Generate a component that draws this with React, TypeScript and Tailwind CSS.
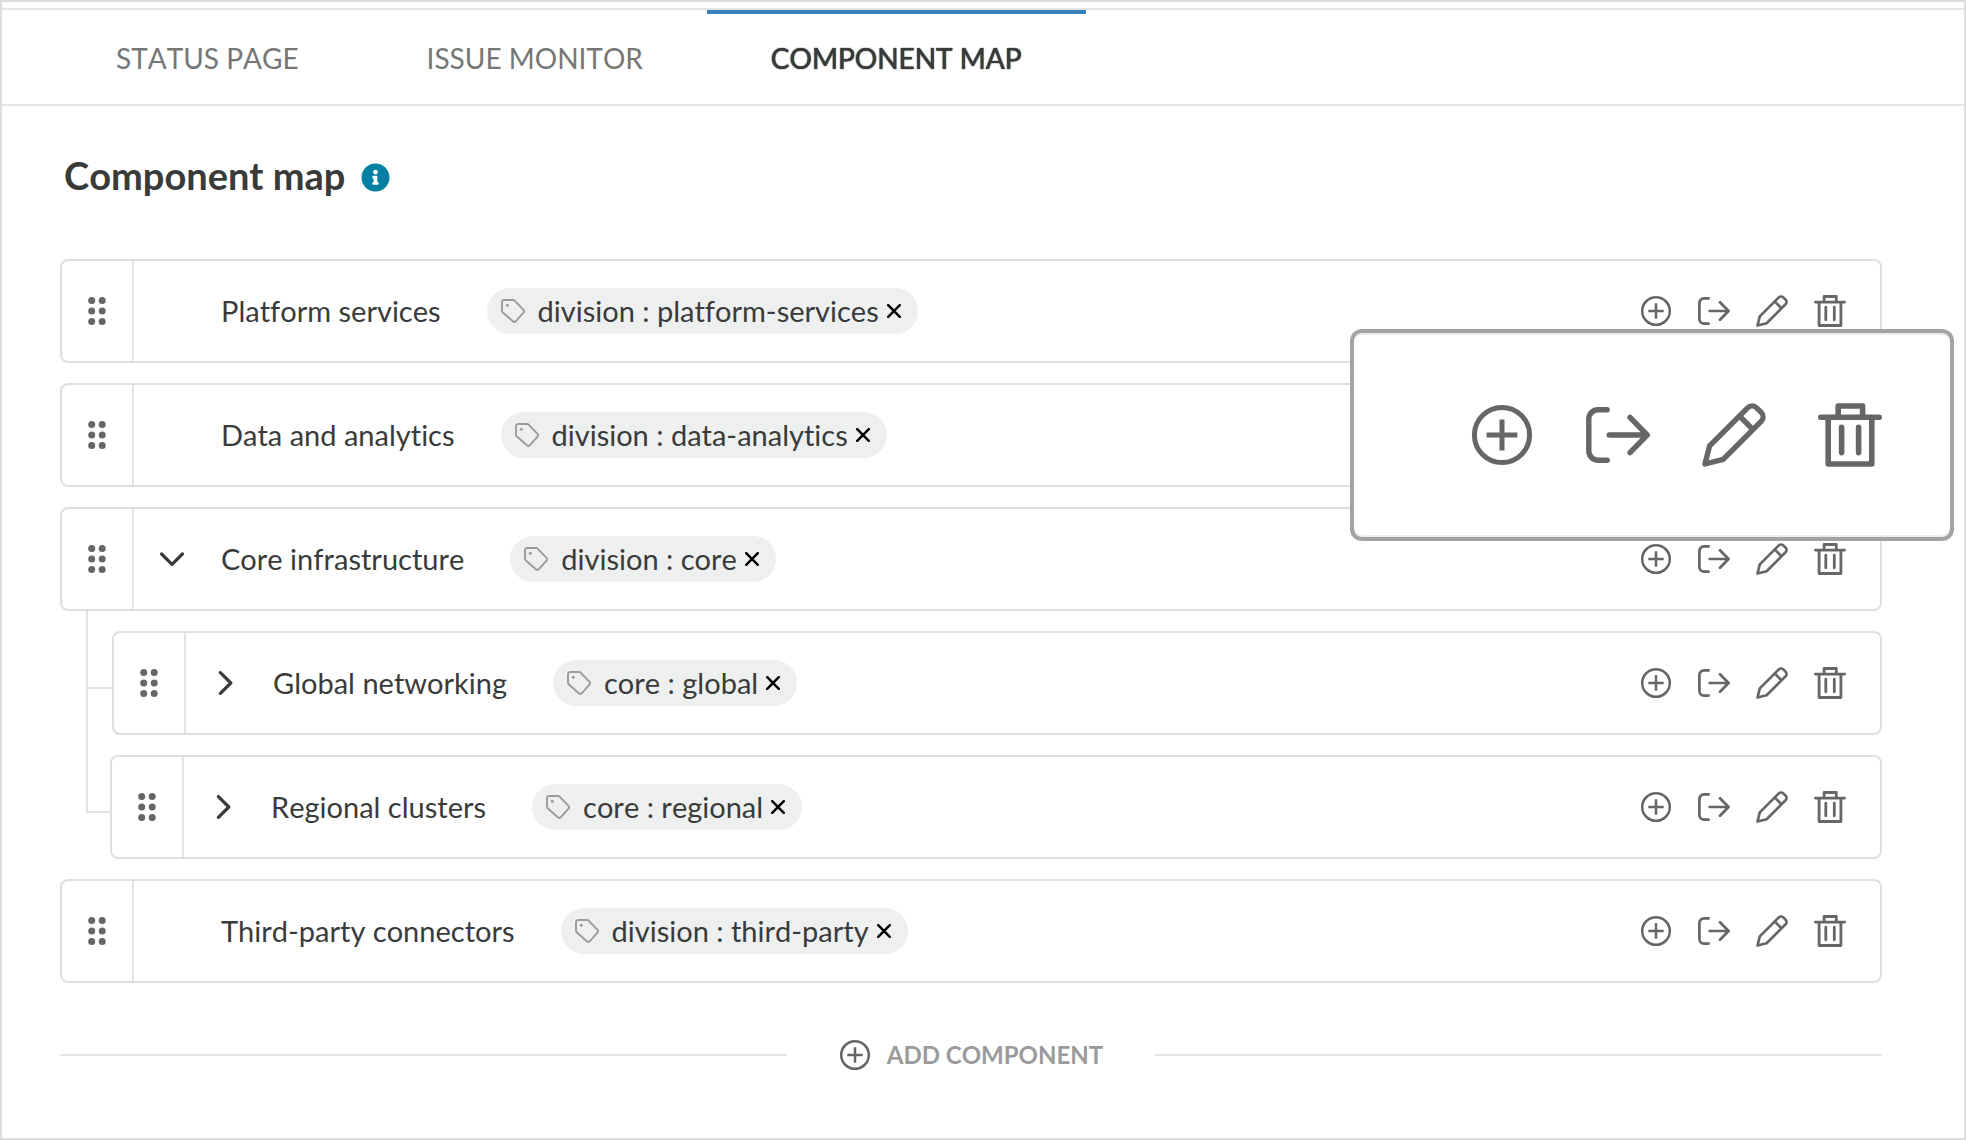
import React from 'react';
import { clsx } from 'clsx';
import { FaInfoCircle } from 'react-icons/fa';

interface ComponentItem {
  id: string;
  name: string;
  tag: string;
  state?: 'open' | 'closed';
  children?: ComponentItem[];
}

const tabs = [
  { id: 'status', label: 'STATUS PAGE' },
  { id: 'issues', label: 'ISSUE MONITOR' },
  { id: 'map', label: 'COMPONENT MAP' },
];

const components: ComponentItem[] = [
  { id: 'platform', name: 'Platform services', tag: 'division : platform-services' },
  { id: 'data', name: 'Data and analytics', tag: 'division : data-analytics' },
  {
    id: 'core',
    name: 'Core infrastructure',
    tag: 'division : core',
    state: 'open',
    children: [
      { id: 'global', name: 'Global networking', tag: 'core : global', state: 'closed' },
      { id: 'regional', name: 'Regional clusters', tag: 'core : regional', state: 'closed' },
    ],
  },
  { id: 'third', name: 'Third-party connectors', tag: 'division : third-party' },
];

function PlusIcon({ className }: { className?: string }) {
  return (
    <svg viewBox="0 0 32 32" fill="none" stroke="currentColor" strokeWidth="2.5" className={className}>
      <circle cx="16" cy="16" r="13.8" />
      <path d="M8.3 16h15.4M16 8.3v15.4" />
    </svg>
  );
}

function MoveIcon({ className }: { className?: string }) {
  return (
    <svg viewBox="0 0 32 32" fill="none" stroke="currentColor" strokeWidth="2.7" strokeLinecap="round" strokeLinejoin="round" className={className}>
      <path d="M10.6 3.4H6A4.6 4.6 0 0 0 1.4 8v16A4.6 4.6 0 0 0 6 28.6h4.6" />
      <path d="M11.6 16h18.8M22 7.2l8.6 8.8-8.6 8.8" />
    </svg>
  );
}

function PencilIcon({ className }: { className?: string }) {
  return (
    <svg viewBox="0 0 32 32" fill="none" stroke="currentColor" strokeWidth="2.7" strokeLinecap="round" strokeLinejoin="round" className={className}>
      <path d="M1.5 30.5 3.8 21.4 22.8 2.4a3.2 3.2 0 0 1 4.5 0l2.3 2.3a3.2 3.2 0 0 1 0 4.5l-19 19z" />
      <path d="m18.8 6.6 6.4 6.4" />
    </svg>
  );
}

function TrashIcon({ className }: { className?: string }) {
  return (
    <svg viewBox="0 0 32 32" fill="none" stroke="currentColor" strokeWidth="2.8" strokeLinecap="round" strokeLinejoin="round" className={className}>
      <path d="M1.4 7.1h29.2M5.1 7.1v23.4h21.8V7.1M10.1 7V1.5h12.2V7" />
      <path d="M11.8 12.2v12.6M20.3 12.2v12.6" />
    </svg>
  );
}

function TagIcon() {
  return (
    <svg viewBox="0 0 24 24" fill="none" stroke="currentColor" strokeWidth="1.9" strokeLinejoin="round" className="size-6 shrink-0 text-[#9a9c9c]">
      <path d="M1 3a2 2 0 0 1 2-2h9.2a2 2 0 0 1 1.4.6l8.9 9.3a2 2 0 0 1 0 2.8l-7.8 8.6a2 2 0 0 1-2.8 0L1.6 13.2A2 2 0 0 1 1 11.8z" />
      <circle cx="6.3" cy="6.3" r="1.5" fill="currentColor" stroke="none" />
    </svg>
  );
}

function Chevron({ open }: { open: boolean }) {
  return (
    <svg viewBox="0 0 24 24" fill="none" stroke="currentColor" strokeWidth="3.2" strokeLinecap="round" strokeLinejoin="round" className="size-6">
      <path d={open ? 'M1.6 7 12 17.4 22.4 7' : 'M8.4 1.6 18.8 12 8.4 22.4'} />
    </svg>
  );
}

const actions = [
  { label: 'Add child', Icon: PlusIcon },
  { label: 'Move', Icon: MoveIcon },
  { label: 'Edit', Icon: PencilIcon },
  { label: 'Delete', Icon: TrashIcon },
];

function ActionButtons({ large = false }: { large?: boolean }) {
  return (
    <div className={clsx('flex items-center text-[#656666]', large ? 'gap-[52px]' : 'gap-[26px]')}>
      {actions.map(({ label, Icon }) => (
        <button key={label} type="button" aria-label={label}>
          <Icon className={large ? 'size-16' : 'size-8'} />
        </button>
      ))}
    </div>
  );
}

function DragHandle() {
  return (
    <button type="button" aria-label="Reorder" className="flex w-[72px] shrink-0 items-center justify-center border-r-2 border-[#e4e4e4]">
      <svg viewBox="0 0 18 28" fill="#656666" className="h-7 w-[18px]">
        {[3.5, 14, 24.5].map((y) => (
          <React.Fragment key={y}>
            <circle cx="3.7" cy={y} r="3.5" />
            <circle cx="14.2" cy={y} r="3.5" />
          </React.Fragment>
        ))}
      </svg>
    </button>
  );
}

function TagChip({ tag }: { tag: string }) {
  return (
    <span className="ml-[46px] flex h-[46px] items-center rounded-full bg-[#eef0ef] pr-[17px] pl-[14px]">
      <TagIcon />
      <span className="ml-[13px] whitespace-nowrap">{tag}</span>
      <button type="button" aria-label={`Remove ${tag}`} className="ml-2 text-black">
        <svg viewBox="0 0 14 14" fill="none" stroke="currentColor" strokeWidth="2.5" strokeLinecap="round" className="size-[14px]">
          <path d="m1.2 1.2 11.6 11.6M12.8 1.2 1.2 12.8" />
        </svg>
      </button>
    </span>
  );
}

function ComponentRow({ item }: { item: ComponentItem }) {
  return (
    <div className="flex h-[104px] flex-1 rounded-lg border-2 border-[#dedfdf] bg-white">
      <DragHandle />
      <div className="flex flex-1 items-center pr-[34px]">
        <div className="flex w-[87px] shrink-0 pl-[26px]">
          {item.state && (
            <button type="button" aria-label={`Toggle ${item.name}`} aria-expanded={item.state === 'open'}>
              <Chevron open={item.state === 'open'} />
            </button>
          )}
        </div>
        <span className="whitespace-nowrap">{item.name}</span>
        <TagChip tag={item.tag} />
        <div className="ml-auto">
          <ActionButtons />
        </div>
      </div>
    </div>
  );
}

function ChildRow({ item, last }: { item: ComponentItem; last: boolean }) {
  return (
    <li className="flex pl-[26px]">
      {/* tree line from the parent down to this row */}
      <div className={clsx('-mt-5 flex flex-col', last ? 'w-6' : 'w-[26px]')}>
        <div className="h-[78px] border-b-2 border-l-2 border-[#e2e2e2]" />
        {!last && <div className="flex-1 border-l-2 border-[#e2e2e2]" />}
      </div>
      <ComponentRow item={item} />
    </li>
  );
}

export default function App() {
  return (
    <div className="relative min-h-screen border-2 border-[#dedede] bg-white pt-[6px] font-['Lato','Noto_Sans',sans-serif] text-[29px] leading-9 text-[#393b3b] [font-kerning:none] [font-variant-ligatures:none]">
      <nav className="flex border-y-2 border-[#e4e4e4] pl-[50px]">
        {tabs.map((tab) => {
          const active = tab.id === 'map';
          return (
            <a
              key={tab.id}
              href={`#${tab.id}`}
              aria-current={active ? 'page' : undefined}
              className={clsx(
                'flex h-[94px] items-center border-t-4 px-16 pb-0.5 text-[28px]',
                active
                  ? 'border-[#3480b8] text-[#393b3b] [text-shadow:0_0_1px_#393b3b,0_0_1px_#393b3b]'
                  : 'border-transparent text-[#757676]'
              )}
            >
              {tab.label}
            </a>
          );
        })}
      </nav>

      <main id="map" className="pt-[50px] pr-[82px] pb-14 pl-[58px]">
        <div className="flex h-[42px] items-center pl-1">
          <h1 className="pb-1 text-[38px] font-bold">Component map</h1>
          <button type="button" aria-label="About the component map" className="ml-4 text-[#0680a2]">
            <FaInfoCircle className="size-[29px]" />
          </button>
        </div>

        <ul className="mt-[61px] flex flex-col gap-5">
          {components.map((item) => (
            <li key={item.id}>
              <ComponentRow item={item} />
              {item.children && (
                <ul className="mt-5 flex flex-col gap-5">
                  {item.children.map((child, i) => (
                    <ChildRow key={child.id} item={child} last={i === item.children!.length - 1} />
                  ))}
                </ul>
              )}
            </li>
          ))}
        </ul>

        <div className="mt-[54px] flex items-center">
          <div className="h-[2px] flex-1 bg-[#e4e4e4]" />
          <button type="button" className="mx-[52px] flex items-center gap-4 text-[24px] font-bold text-[#9a9b9b]">
            <PlusIcon className="size-8 text-[#656666]" />
            ADD COMPONENT
          </button>
          <div className="h-[2px] flex-1 bg-[#e4e4e4]" />
        </div>
      </main>

      {/* magnified copy of the row actions */}
      <div className="absolute top-[327px] right-[10px] flex h-[212px] w-[604px] items-center justify-end rounded-xl border-4 border-[#a3a3a3] bg-white pr-[68px] shadow-[inset_0_2px_0_#ececec,inset_0_-2px_0_#ececec]">
        <ActionButtons large />
      </div>
    </div>
  );
}
